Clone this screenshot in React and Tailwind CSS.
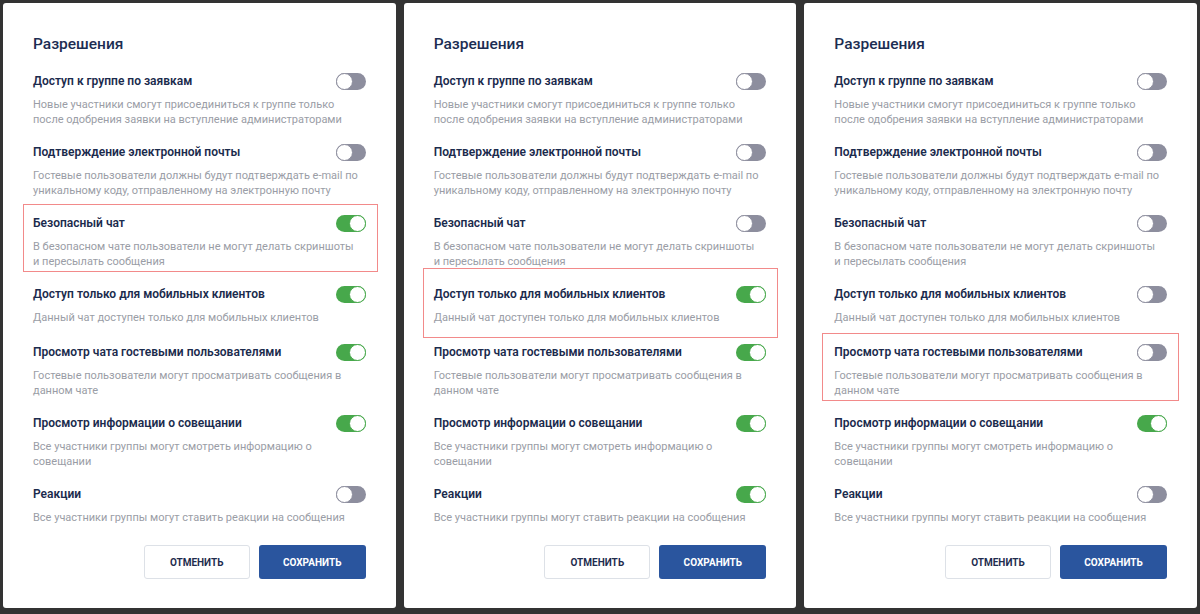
import React from 'react';

const rows = [
  {
    title: 'Доступ к группе по заявкам',
    desc: ['Новые участники смогут присоединиться к группе только', 'после одобрения заявки на вступление администраторами'],
  },
  {
    title: 'Подтверждение электронной почты',
    desc: ['Гостевые пользователи должны будут подтверждать e-mail по', 'уникальному коду, отправленному на электронную почту'],
  },
  {
    title: 'Безопасный чат',
    desc: ['В безопасном чате пользователи не могут делать скриншоты', 'и пересылать сообщения'],
  },
  {
    title: 'Доступ только для мобильных клиентов',
    desc: ['Данный чат доступен только для мобильных клиентов'],
  },
  {
    title: 'Просмотр чата гостевыми пользователями',
    desc: ['Гостевые пользователи могут просматривать сообщения в', 'данном чате'],
  },
  {
    title: 'Просмотр информации о совещании',
    desc: ['Все участники группы могут смотреть информацию о', 'совещании'],
  },
  {
    title: 'Реакции',
    desc: ['Все участники группы могут ставить реакции на сообщения'],
  },
];

const panels = [
  { states: [false, false, true, true, true, true, false], mark: 2, box: 'top-[-9px] bottom-[-3px] left-[-10px] right-[-12px]' },
  { states: [false, false, false, true, true, true, true], mark: 3, box: 'top-[-16px] bottom-[-11px] left-[-11px] right-[-12px]' },
  { states: [false, false, false, false, false, true, false], mark: 4, box: 'top-[-9px] bottom-[-3px] left-[-12px] right-[-12px]' },
];

const Toggle = ({ on }) => (
  <div
    className={`relative w-[30px] h-[17px] rounded-full shrink-0 ${on ? 'bg-[#47a84b]' : 'bg-[#8d8e9e]'}`}
  >
    <div
      className={`absolute top-0 w-[17px] h-[17px] rounded-full bg-white border ${
        on ? 'right-0 border-[#47a84b]' : 'left-0 border-[#8d8e9e]'
      }`}
    />
  </div>
);

const Row = ({ row, on, marked, box }) => (
  <div className="relative">
    {marked && <div className={`absolute border border-[#f28a8a] ${box}`} />}
    <div className="flex items-center justify-between h-[20px]">
      <span className="text-[12px] font-semibold text-[#1b2b4d] leading-[20px]">{row.title}</span>
      <Toggle on={on} />
    </div>
    <p
      className={`mt-[7px] text-[11px] leading-[14.5px] text-[#9a9da6] ${
        row.desc.length === 1 ? 'h-[16px]' : 'h-[29px]'
      }`}
    >
      {row.desc.map((line, i) => (
        <span key={i} className="block whitespace-nowrap">
          {line}
        </span>
      ))}
    </p>
  </div>
);

const Panel = ({ panel }) => (
  <div className="flex-1 min-w-0 bg-white rounded-[3px] px-[30px] pt-[29px] pb-[30px] flex flex-col">
    <h2 className="text-[15.5px] font-medium leading-[24px] text-[#1c2d52]">Разрешения</h2>

    <div className="mt-[15px] flex flex-col gap-[15px]">
      {rows.map((row, i) => (
        <Row key={i} row={row} on={panel.states[i]} marked={panel.mark === i} box={panel.box} />
      ))}
    </div>

    <div className="mt-auto pt-[18px] flex justify-end gap-[9px]">
      <button className="w-[106px] h-[34px] rounded-[3px] border border-[#dde1e7] bg-white text-[10px] font-bold text-[#1f2d4f]">
        ОТМЕНИТЬ
      </button>
      <button className="w-[107px] h-[34px] rounded-[3px] bg-[#2a559e] text-[10px] font-bold text-white">
        СОХРАНИТЬ
      </button>
    </div>
  </div>
);

const App = () => {
  return (
    <div
      className="w-[1200px] h-[614px] bg-[#333333] flex gap-[8px] px-[3px] pt-[3px] pb-[6px]"
      style={{ fontFamily: 'Roboto, "Noto Sans", sans-serif' }}
    >
      {panels.map((panel, i) => (
        <Panel key={i} panel={panel} />
      ))}
    </div>
  );
};

export default App;
